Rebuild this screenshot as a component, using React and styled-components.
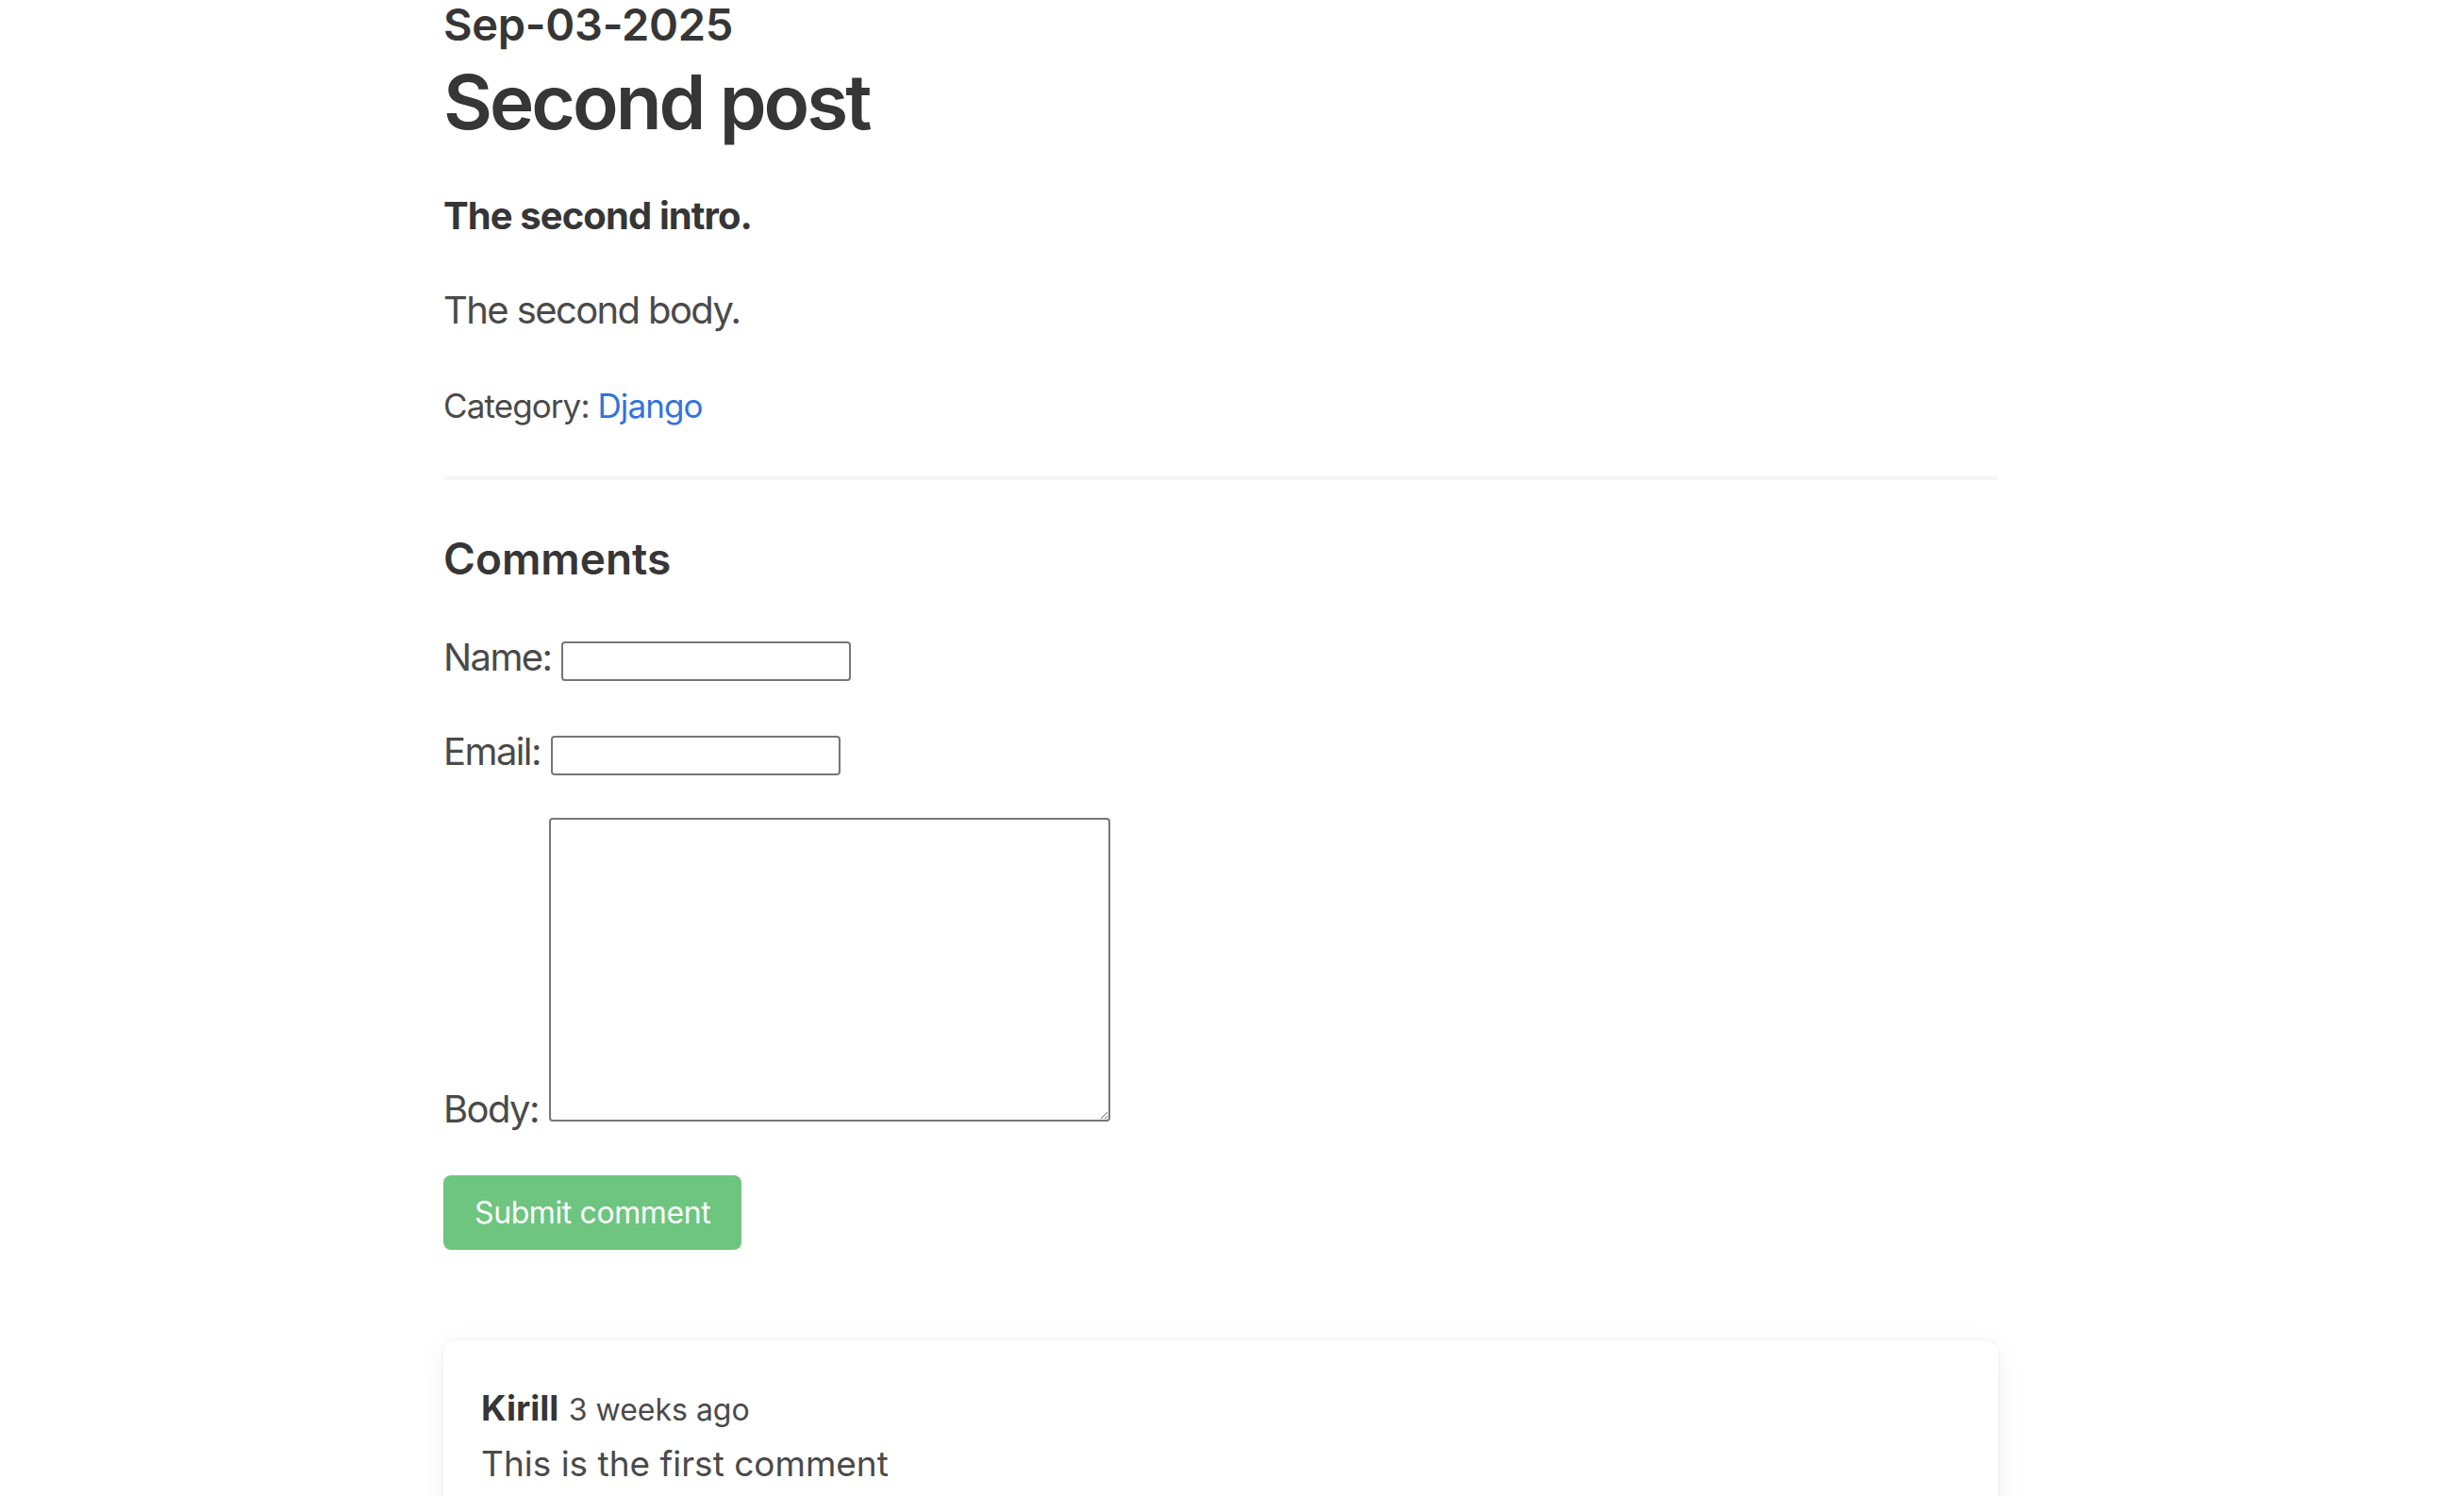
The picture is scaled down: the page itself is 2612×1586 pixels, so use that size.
import React from 'react';
import styled, { createGlobalStyle } from 'styled-components';

const GlobalStyle = createGlobalStyle`
  html, body {
    margin: 0;
    padding: 0;
    background: #fff;
  }
  body {
    font-family: "Inter", "Liberation Sans", sans-serif;
    color: #4a4a4a;
    -webkit-font-smoothing: antialiased;
  }
`

const Page = styled.div`
  width: 1648px;
  margin-left: 470px;
  display: flex;
  flex-direction: column;
  align-items: stretch;
`

const DateLine = styled.div`
  margin-top: -2px;
  font-size: 47px;
  line-height: 56px;
  font-weight: 600;
  letter-spacing: -0.3px;
  color: #363636;
`

const Title = styled.h1`
  margin: 9px 0 46px;
  font-size: 80px;
  line-height: 90px;
  font-weight: 600;
  letter-spacing: -3px;
  color: #363636;
`

const Para = styled.p`
  margin: 0 0 40px;
  font-size: 40px;
  line-height: 60px;
  font-weight: ${p => (p.$strong ? 700 : 400)};
  letter-spacing: ${p => (p.$strong ? '-0.9px' : '-1.6px')};
  color: ${p => (p.$strong ? '#363636' : '#4a4a4a')};
`

const Small = styled.span`
  font-size: 35px;
  letter-spacing: -0.9px;
`

const Link = styled.a`
  color: #3273dc;
  text-decoration: none;
`

const Rule = styled.hr`
  margin: 5px 0 0;
  height: 4px;
  border: none;
  background: #f5f5f5;
`

const SectionTitle = styled.h2`
  margin: 55px 0 47px;
  font-size: 46px;
  line-height: 56px;
  font-weight: 600;
  color: #363636;
`

const Form = styled.form`
  display: flex;
  flex-direction: column;
  align-items: flex-start;
`

const Row = styled.div`
  display: flex;
  align-items: ${p => (p.$bottom ? 'flex-end' : 'flex-start')};
  gap: 11px;
  margin-bottom: 40px;
  font-size: 40px;
  line-height: 60px;
  letter-spacing: -1.6px;
  color: #4a4a4a;
`

const Label = styled.label`
  white-space: nowrap;
`

const TextInput = styled.input`
  box-sizing: border-box;
  width: 307px;
  height: 42px;
  margin-top: 13px;
  padding: 2px 4px;
  border: 2px solid #767676;
  border-radius: 4px;
  font-size: 26px;
  background: #fff;
  outline: none;
`

const TextArea = styled.textarea`
  box-sizing: border-box;
  width: 595px;
  height: 322px;
  margin-bottom: 17px;
  padding: 4px;
  border: 2px solid #767676;
  border-radius: 4px;
  font-size: 26px;
  background: #fff;
  outline: none;
  resize: both;
`

const SubmitButton = styled.button`
  display: flex;
  align-items: center;
  justify-content: center;
  box-sizing: border-box;
  height: 79px;
  padding: 0 33px;
  border: none;
  border-radius: 8px;
  background: #6dc57f;
  color: #fff;
  font-family: inherit;
  font-size: 32px;
  letter-spacing: -0.4px;
  cursor: pointer;
`

const CommentCard = styled.div`
  margin-top: 96px;
  padding: 43px 40px 40px;
  background: #fff;
  border-radius: 12px;
  box-shadow: 0 8px 32px rgba(10, 10, 10, 0.06), 0 0 0 2px rgba(10, 10, 10, 0.02);
  font-size: 37px;
  line-height: 57px;
  color: #4a4a4a;
`

const Author = styled.strong`
  font-weight: 700;
  color: #363636;
`

const When = styled.span`
  font-size: 32px;
`

const comments = [
  { name: 'Kirill', when: '3 weeks ago', body: 'This is the first comment' },
];

export default function App() {
  return (
    <>
      <GlobalStyle />
      <Page>
        <DateLine>Sep-03-2025</DateLine>
        <Title>Second post</Title>
        <Para $strong>The second intro.</Para>
        <Para>The second body.</Para>
        <Para>
          <Small>
            Category: <Link href="#">Django</Link>
          </Small>
        </Para>
        <Rule />

        <SectionTitle>Comments</SectionTitle>
        <Form onSubmit={e => e.preventDefault()}>
          <Row>
            <Label htmlFor="id_name">Name:</Label>
            <TextInput id="id_name" type="text" />
          </Row>
          <Row>
            <Label htmlFor="id_email">Email:</Label>
            <TextInput id="id_email" type="email" />
          </Row>
          <Row $bottom>
            <Label htmlFor="id_body">Body:</Label>
            <TextArea id="id_body" />
          </Row>
          <SubmitButton type="submit">Submit comment</SubmitButton>
        </Form>

        {comments.map(c => (
          <CommentCard key={c.name}>
            <div>
              <Author>{c.name}</Author> <When>{c.when}</When>
            </div>
            <div>{c.body}</div>
          </CommentCard>
        ))}
      </Page>
    </>
  );
}
